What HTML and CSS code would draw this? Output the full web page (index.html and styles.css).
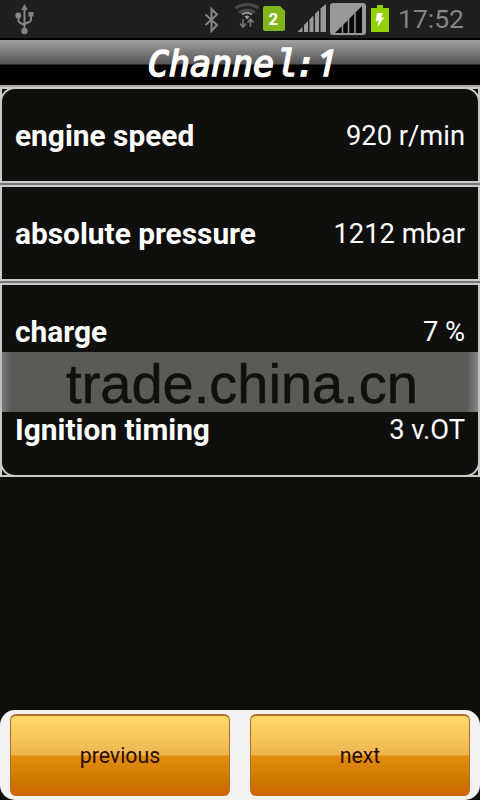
FILE: index.html
```html
<!DOCTYPE html>
<html lang="en">
<head>
<meta charset="utf-8">
<title>Channel 1</title>
<link rel="stylesheet" href="styles.css">
</head>
<body>
<div class="screen">
  <header class="status">
    <svg class="icons" width="480" height="38" viewBox="0 0 480 38">
      <g fill="none" stroke="#858585" stroke-width="2">
        <path d="M24.500 9V31M18.500 16v4.500q0 2 3 3l3 1.500M31 14v5.500q0 2-3 3l-3.500 1.500"/>
        <path d="M205.500 14.500l11.500 10.500-5.500 6V9l5.500 5.500-11.500 10.500"/>
      </g>
      <g fill="#858585"><path d="M24.500 4l3.300 6h-6.600z"/><circle cx="18.300" cy="15.500" r="2.900"/><rect x="28.500" y="12" width="5" height="4.500"/><circle cx="24.500" cy="31" r="3.200"/></g>
      <g fill="none" stroke="#4a4a4a" stroke-width="3.200"><path d="M235.500 8q11.500-7 23 0M239 12.500q8-5 16 0"/></g>
      <path d="M242 14.500q5-3.500 10 0" fill="none" stroke="#999" stroke-width="2"/>
      <path d="M244.500 16.500q2.500-2 5 0l-2.500 3z" fill="#999"/>
      <path d="M243 19v7.500m-3-3l3 3.500 3-3.500M250.500 27v-7.500m-3 3l3-3.500 3 3.500" fill="none" stroke="#777" stroke-width="1.600"/>
      <path d="M265 6h15l5 5v18q0 2-2 2h-18q-2 0-2-2V8q0-2 2-2z" fill="#83b51b"/>
      <text class="sim" x="268.500" y="25">2</text>
      <g fill="#999"><path d="M297.500 32l5-5v5zM304 32v-7l4-4v11zM309.500 32V19.500l4-4v16.500zM315 32V14l4-4v22zM320.500 32V8.500l5.500-4.500v28z"/></g>
      <rect x="330" y="3" width="36" height="32" rx="3" fill="#999"/>
      <path d="M335 33L362 6V33z" fill="#080808"/>
      <path d="M342.500 25v8M348.500 19v14M355 13v20" stroke="#999" stroke-width="1.500"/>
      <path d="M377 5h6v3h6v24h-18V8h6z" fill="#91d100"/>
      <path d="M377 13h6l-2 5 3.500-1-7 10 1-6.500-3 1z" fill="#fff"/>
    </svg>
    <time class="clock">17:52</time>
  </header>
  <h1 class="title">Channe<span class="ell">l</span>:<span class="digit">1</span></h1>
  <main class="list">
    <div class="row first"><b>engine speed</b><span>920 r/min</span></div>
    <div class="row"><b>absolute pressure</b><span>1212 mbar</span></div>
    <div class="row"><b>charge</b><span>7 %</span></div>
    <div class="row last"><b>Ignition timing</b><span>3 v.OT</span></div>
  </main>
  <div class="watermark"><span>trade.china.cn</span></div>
  <footer class="bar"><button>previous</button><button>next</button></footer>
</div>
</body>
</html>
```
FILE: styles.css
```css
* { box-sizing: border-box; }
body { margin: 0; background: #0e0e0d; font-family: Roboto, sans-serif; }
.screen {
  position: relative; width: 480px; height: 800px; overflow: hidden;
  display: flex; flex-direction: column; color: #fff;
  background: repeating-conic-gradient(#0d0d0c 0 25%, #10100f 0 50%) 0 0 / 4px 4px;
}
.status { position: relative; height: 40px; flex: none; background: linear-gradient(#1f1f1f 38px, #000 38px); }
.icons { position: absolute; left: 0; top: 0; }
.sim { font: bold 17px Roboto, sans-serif; fill: #fff; }
.clock { position: absolute; right: 16px; top: 3px; font-size: 26.500px; line-height: 31px; color: #858585; }
.title {
  margin: 0; height: 45px; flex: none; text-align: center; padding-left: 5px;
  font: italic 400 35px/48px "DejaVu Sans Mono", monospace;
  -webkit-text-stroke: 1.600px #fff;
  background: linear-gradient(#a0a0a0, #555 24px, #030000 25px, #030000);
}
.title span { display: inline-block; width: 21px; line-height: 1; }
.ell { font-family: "Liberation Mono", monospace; font-size: 38px; }
.digit { font-family: "Noto Sans", sans-serif; font-size: 36px; }
.list {
  height: 392px; flex: none; display: flex; flex-direction: column; gap: 2px;
  background: #777; border-top: 2px solid #a9a5a4;
}
.row {
  position: relative;
  height: 96px; flex: none; display: flex; align-items: center; justify-content: space-between;
  padding: 2px 13px 0; border: 2px solid #cacaca;
  background: repeating-conic-gradient(#0d0d0c 0 25%, #111110 0 50%) 0 0 / 4px 4px;
}
.row b { font-size: 29.850px; line-height: 36px; }
.row span { font-size: 27.300px; }
.first::before, .last::before { content: ""; position: absolute; inset: -2px; border: 2px solid #cacaca; }
.first::before { border-radius: 15px 15px 0 0; }
.last::before { border-radius: 0 0 15px 15px; }
.watermark {
  position: absolute; left: 2px; top: 352px; width: 476px; height: 60px; padding-left: 4px;
  background: linear-gradient(90deg, #777 0, #5a5a59 9px, #5a5a59 465px, #888);
  box-shadow: -2px 0 #c0c0c0, 2px 0 #c0c0c0;
  color: #10100f; text-align: center; font: 56px/63px "Liberation Sans", sans-serif;
  -webkit-text-stroke: 0.600px #10100f;
}
.bar {
  margin-top: auto; height: 90px; padding: 4px 10px; display: flex; gap: 20px;
  background: #f2f2f2; border-radius: 15px;
}
button {
  flex: 1; height: 82px; padding: 0 0 2px; border: 1px solid #b46b25; border-top-width: 2px; border-bottom: 0; border-radius: 6px;
  font: 21.300px Roboto, sans-serif; color: #2b0b00;
  background: linear-gradient(#ffd969, #eeb550 39px, #e38e0c 40px, #cd7600 66px, #d26500);
}
```
